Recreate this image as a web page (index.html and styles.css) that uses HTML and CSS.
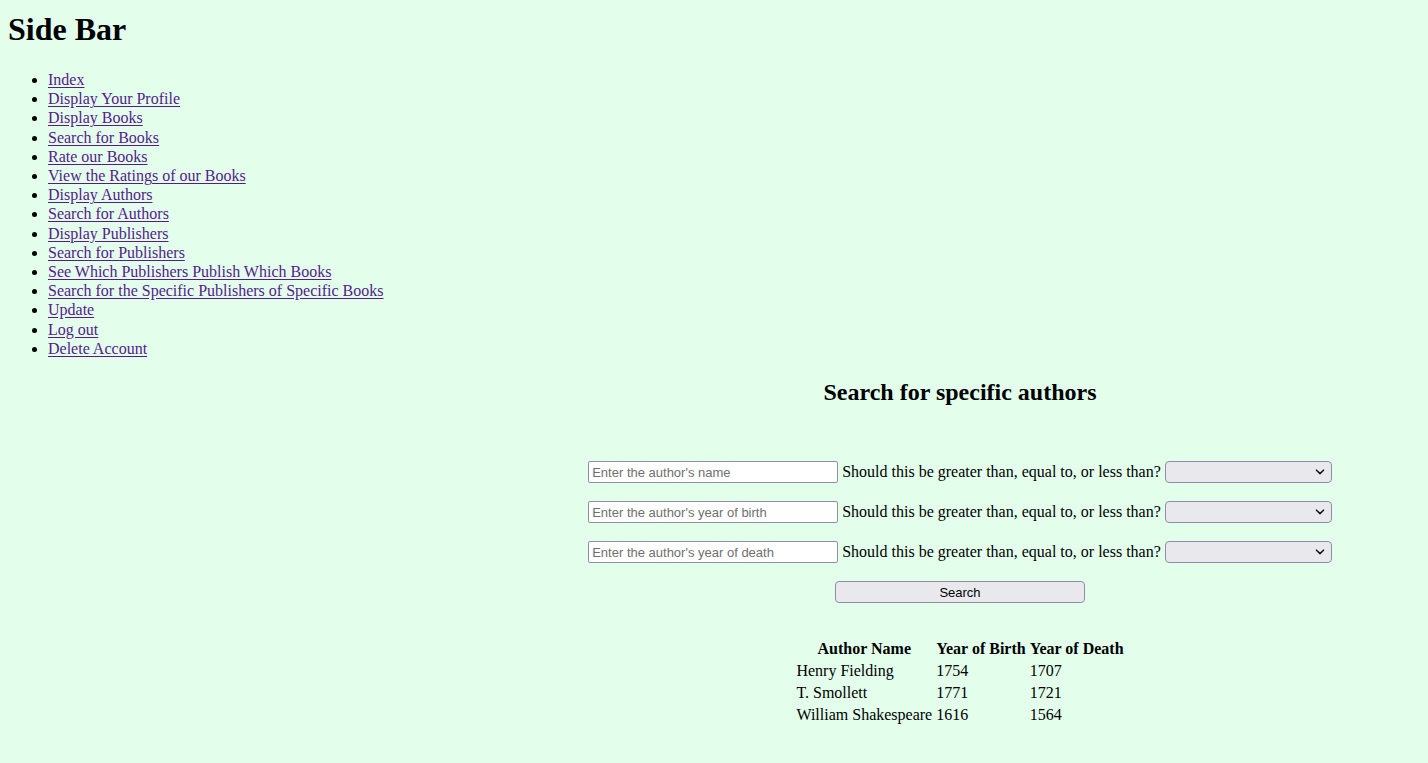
FILE: index.html
```html
<!DOCTYPE html>
<html>
<head>
<meta charset="utf-8">
<title>Search for Authors</title>
<link rel="stylesheet" href="styles.css">
</head>
<body>
<div class="page">
  <nav class="sidebar">
    <h1 class="title">Side Bar</h1>
    <ul class="nav-list">
      <li><a href="#">Index</a></li>
      <li><a href="#">Display Your Profile</a></li>
      <li><a href="#">Display Books</a></li>
      <li><a href="#">Search for Books</a></li>
      <li><a href="#">Rate our Books</a></li>
      <li><a href="#">View the Ratings of our Books</a></li>
      <li><a href="#">Display Authors</a></li>
      <li><a href="#">Search for Authors</a></li>
      <li><a href="#">Display Publishers</a></li>
      <li><a href="#">Search for Publishers</a></li>
      <li><a href="#">See Which Publishers Publish Which Books</a></li>
      <li><a href="#">Search for the Specific Publishers of Specific Books</a></li>
      <li><a href="#">Update</a></li>
      <li><a href="#">Log out</a></li>
      <li><a href="#">Delete Account</a></li>
    </ul>
  </nav>
  <main class="main">
    <h2 class="heading">Search for specific authors</h2>
    <form class="search-form">
      <div class="row">
        <input class="field" type="text" placeholder="Enter the author's name">
        <span class="label">Should this be greater than, equal to, or less than?</span>
        <div class="select-wrap">
          <select class="select"><option></option></select>
          <svg class="chev" width="10" height="6" viewBox="0 0 10 6"><path d="M1.5 1.2 L5 4.6 L8.5 1.2" fill="none" stroke="#1a1a1a" stroke-width="1.6" stroke-linecap="round" stroke-linejoin="round"/></svg>
        </div>
      </div>
      <div class="row">
        <input class="field" type="text" placeholder="Enter the author's year of birth">
        <span class="label">Should this be greater than, equal to, or less than?</span>
        <div class="select-wrap">
          <select class="select"><option></option></select>
          <svg class="chev" width="10" height="6" viewBox="0 0 10 6"><path d="M1.5 1.2 L5 4.6 L8.5 1.2" fill="none" stroke="#1a1a1a" stroke-width="1.6" stroke-linecap="round" stroke-linejoin="round"/></svg>
        </div>
      </div>
      <div class="row">
        <input class="field" type="text" placeholder="Enter the author's year of death">
        <span class="label">Should this be greater than, equal to, or less than?</span>
        <div class="select-wrap">
          <select class="select"><option></option></select>
          <svg class="chev" width="10" height="6" viewBox="0 0 10 6"><path d="M1.5 1.2 L5 4.6 L8.5 1.2" fill="none" stroke="#1a1a1a" stroke-width="1.6" stroke-linecap="round" stroke-linejoin="round"/></svg>
        </div>
      </div>
      <div class="row">
        <button class="btn" type="button">Search</button>
      </div>
    </form>
    <table class="results">
      <thead>
        <tr><th>Author Name</th><th>Year of Birth</th><th>Year of Death</th></tr>
      </thead>
      <tbody>
        <tr><td>Henry Fielding</td><td>1754</td><td>1707</td></tr>
        <tr><td>T. Smollett</td><td>1771</td><td>1721</td></tr>
        <tr><td>William Shakespeare</td><td>1616</td><td>1564</td></tr>
      </tbody>
    </table>
  </main>
</div>
</body>
</html>
```

FILE: styles.css
```css
html, body {
  margin: 0;
  padding: 0;
  background: #e3ffec;
}
body {
  font-family: "Liberation Serif", "Times New Roman", serif;
  font-size: 16px;
  color: #000;
}
.page {
  padding: 0 8px 40px 8px;
}
.title {
  font-size: 32px;
  line-height: 37px;
  font-weight: bold;
  margin: 0;
  padding: 11px 0 22px 0;
}
.nav-list {
  margin: 0;
  padding: 0 0 0 40px;
  line-height: 19.2px;
}
.nav-list a {
  color: #551a8b;
  text-decoration: underline;
  text-underline-offset: 2px;
}
.main {
  margin: 19.6px 0 0 492px;
}
.heading {
  font-size: 24px;
  line-height: 28px;
  font-weight: bold;
  text-align: center;
  margin: 0;
}
.search-form {
  margin-top: 55.4px;
  display: flex;
  flex-direction: column;
  gap: 18px;
}
.row {
  display: flex;
  align-items: center;
  justify-content: center;
  gap: 4px;
  height: 22px;
}
.label {
  line-height: 22px;
  white-space: nowrap;
}
.field {
  box-sizing: border-box;
  width: 250px;
  height: 22px;
  margin: 0;
  padding: 1px 3px;
  border: 1px solid #8f8f9d;
  border-radius: 2px;
  background: #fff;
  font-family: "Liberation Sans", Arial, sans-serif;
  font-size: 13px;
  color: #000;
}
.field::placeholder {
  color: #6f6f6f;
  opacity: 1;
}
.select-wrap {
  position: relative;
  width: 167px;
  height: 22px;
}
.select {
  appearance: none;
  -webkit-appearance: none;
  box-sizing: border-box;
  width: 167px;
  height: 22px;
  margin: 0;
  border: 1px solid #8f8f9d;
  border-radius: 4px;
  background: #e9e9ed;
  font-family: "Liberation Sans", Arial, sans-serif;
  font-size: 13px;
  display: block;
}
.chev {
  position: absolute;
  right: 7px;
  top: 8px;
  pointer-events: none;
}
.btn {
  box-sizing: border-box;
  width: 250px;
  height: 22px;
  margin: 0;
  padding: 0;
  border: 1px solid #8f8f9d;
  border-radius: 4px;
  background: #e9e9ed;
  font-family: "Liberation Sans", Arial, sans-serif;
  font-size: 13px;
  color: #000;
}
.results {
  margin: 34px auto 0 auto;
  border-spacing: 2px;
  line-height: 18px;
}
.results th,
.results td {
  padding: 1px;
}
.results th {
  font-weight: bold;
  text-align: center;
}
.results td {
  text-align: left;
}
```
